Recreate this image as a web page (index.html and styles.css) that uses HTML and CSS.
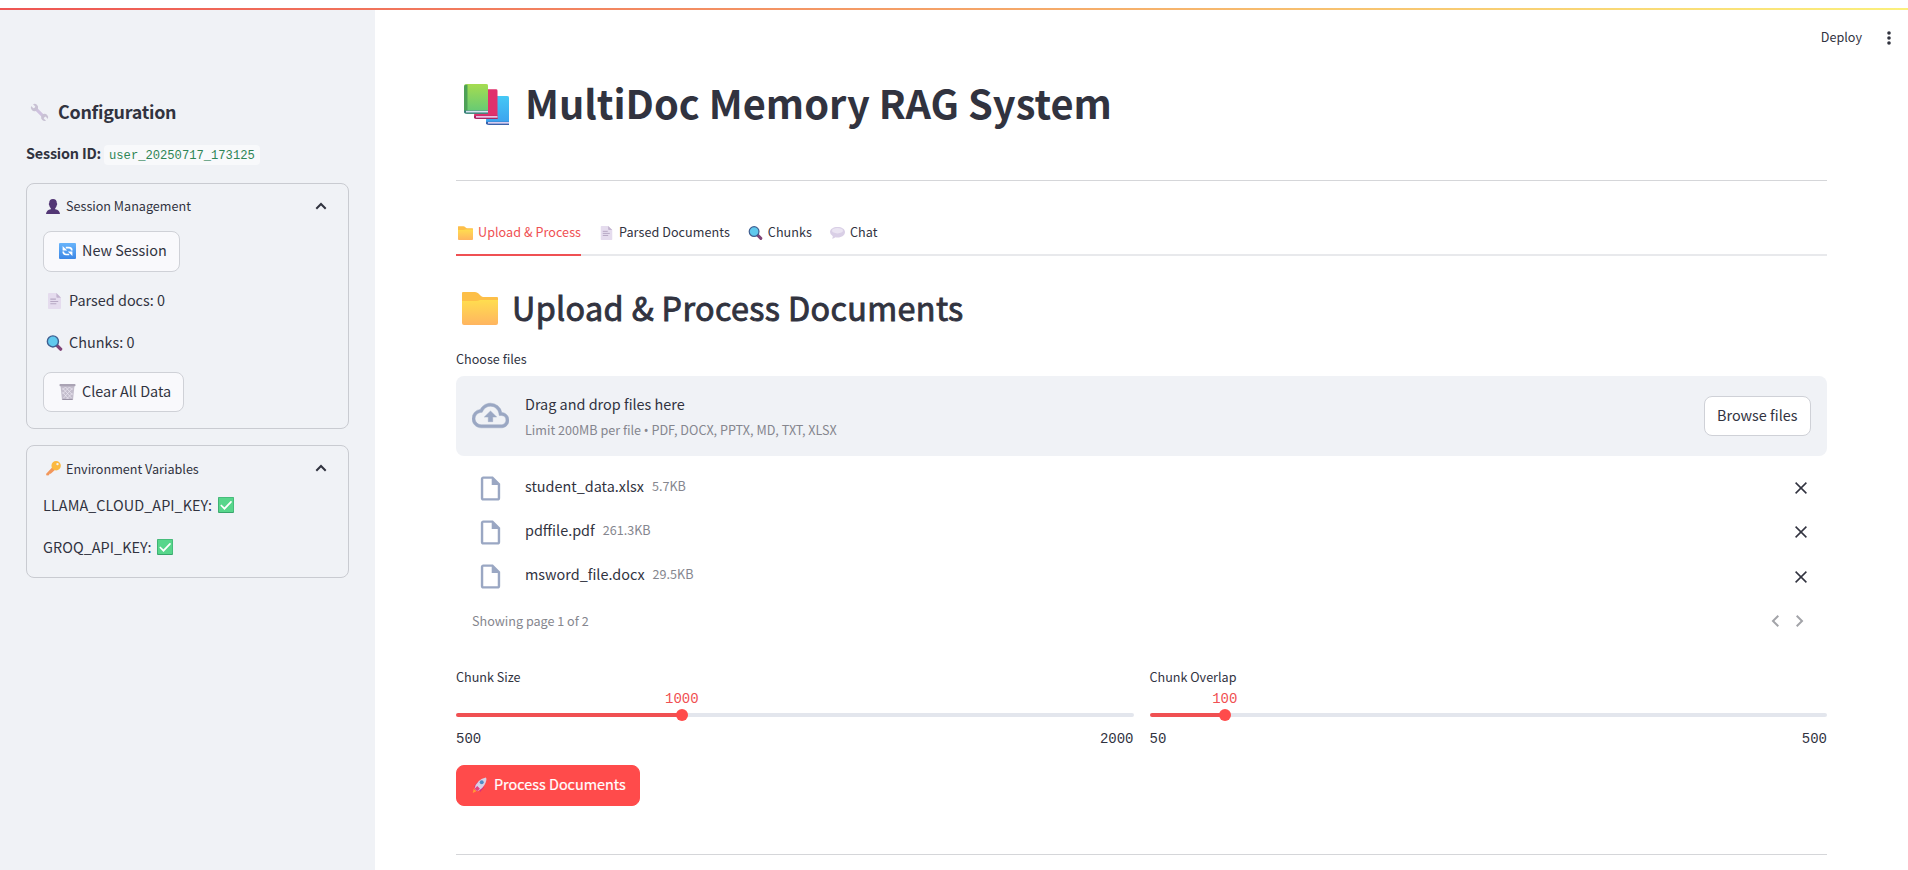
FILE: index.html
```html
<!DOCTYPE html>
<html lang="en">
<head>
<meta charset="utf-8">
<title>MultiDoc Memory RAG System</title>
<link rel="stylesheet" href="styles.css">
</head>
<body>
<svg class="sprite" width="0" height="0">
  <defs>
    <linearGradient id="gy" x1="0" y1="0" x2="0" y2="1"><stop offset="0" stop-color="#ffdd4f"/><stop offset="1" stop-color="#ffb560"/></linearGradient>
    <linearGradient id="gg" x1="0" y1="0" x2="0" y2="1"><stop offset="0" stop-color="#a5dc50"/><stop offset="1" stop-color="#60c878"/></linearGradient>
    <linearGradient id="gb" x1="0" y1="0" x2="0" y2="1"><stop offset="0" stop-color="#45c8f5"/><stop offset="1" stop-color="#3ba0ee"/></linearGradient>
    <linearGradient id="gs" x1="0" y1="0" x2="0" y2="1"><stop offset="0" stop-color="#68b4fb"/><stop offset="1" stop-color="#3c87e6"/></linearGradient>
  </defs>
  <symbol id="folder" viewBox="0 0 36 33"><path d="M1 0h12q2 0 3.500 1.500L19 4q1 1 2.500 1H35q1 0 1 1v8H0V1q0-1 1-1z" fill="#fdbf48"/><path d="M0 9h14q2 0 4-1h18v23q0 2-2 2H2q-2 0-2-2z" fill="url(#gy)"/></symbol>
  <symbol id="page" viewBox="0 0 14 17"><path d="M1 0h8l5 5v11q0 1-1 1H1q-1 0-1-1V1q0-1 1-1z" fill="#e5dcee"/><path d="M9 0l5 5H10q-1 0-1-1z" fill="#c3b4cf"/><path d="M2.500 6.500h6M2.500 9h8.500M2.500 11.500h6.500" stroke="#b7a8c4" stroke-width="1.200"/></symbol>
  <symbol id="lens" viewBox="0 0 17 17"><path d="M10.500 10.500l4.500 4.500" stroke="#814478" stroke-width="3.600" stroke-linecap="round"/><circle cx="6.800" cy="6.800" r="5.900" fill="#60c9ee" stroke="#405f91" stroke-width="1.500"/></symbol>
  <symbol id="bubble" viewBox="0 0 15 12"><path d="M7.500 0C11.800 0 15 2 15 5s-3 5.500-7.500 5.500q-1 0-2-.2L2.300 12 2.800 9.200Q0 7.600 0 5c0-3 3.300-5 7.500-5z" fill="#d9cfe6"/><ellipse cx="7.500" cy="3.700" rx="5.500" ry="2.700" fill="#eae4f2"/></symbol>
  <symbol id="check" viewBox="0 0 16 16"><rect width="16" height="16" rx="1" fill="#37a46b"/><rect x=".7" y=".4" width="14.800" height="14.600" rx=".8" fill="#57d68b"/><path d="M3.300 8.500l3.200 3.200L13 4.800" fill="none" stroke="#fff" stroke-width="1.700" stroke-linecap="round"/></symbol>
  <symbol id="wrench" viewBox="0 0 19 19"><path d="M4.600 4.600l9.800 9.800" stroke="#cfc2df" stroke-width="3"/><path d="M3 1.200L5.300 3.400 4.900 5 3.400 5.300 1.100 3.100A3.700 3.700 0 0 0 5.700 8 3.700 3.700 0 0 0 8 5.600 3.700 3.700 0 0 0 3 1.200zM16 17.800l-2.300-2.200.4-1.600 1.500-.4 2.300 2.300a3.700 3.700 0 0 0-4.600-4.900 3.700 3.700 0 0 0-2.100 2.400 3.700 3.700 0 0 0 4.800 4.400z" fill="#c9c2d4"/></symbol>
  <symbol id="person" viewBox="0 0 14 15"><path d="M7 0Q10.800 0 10.800 4q1 .8 0 2.300-.4 2-1.600 2.900v1Q13.600 11 14 15H0q.4-4 4.800-4.800v-1Q3.600 8.300 3.200 6.300 2.200 4.800 3.200 4 3.200 0 7 0z" fill="#533775"/></symbol>
  <symbol id="cycle" viewBox="0 0 17 16"><rect width="17" height="16" rx="1" fill="url(#gs)"/><path d="M6.800 4.600h3.200q2.800 0 2.800 2.900M10.200 11.500H7q-2.800 0-2.800-2.900" fill="none" stroke="#fff" stroke-width="1.700"/><path d="M3.600 3v4.600h4.600zM13.400 13V8.500H8.800z" fill="#fff"/></symbol>
  <symbol id="bin" viewBox="0 0 16 16"><path d="M1 1.500h14L13.500 16h-11z" fill="#c3bdcc"/><path d="M3 4l9 10M6 3l7 8M10 3l3 3M3 8l6 7M13 4L4 14M10 3L3 10M6 3L3 6M13 9l-6 6" stroke="#eeeaf3" stroke-width=".7"/><path d="M3 15.500h10" stroke="#9a93a5"/><rect width="16" height="2.200" rx=".8" fill="#aaa3b4"/></symbol>
  <symbol id="key" viewBox="0 0 15 15"><path d="M6.300 6.300l2.600 2.600-4.200 3.900-1.200-.1-.5 1.500L.6 14.600 0 13z" fill="#f2975b"/><path d="M10.200 0a4.700 4.700 0 1 1-.1 9.400A4.700 4.700 0 0 1 10.200 0zm1.300 1.900a1.200 1.200 0 1 0 .01 2.400 1.200 1.200 0 0 0 0-2.400z" fill="#fbb941" fill-rule="evenodd"/></symbol>
  <symbol id="books" viewBox="0 0 45 55" preserveAspectRatio="none"><path d="M23 16h20q2 0 2 2v36H25q-3 0-3-3z" fill="url(#gb)"/><path d="M22 50.500h23V55H25q-3 0-3-2z" fill="#3b62aa"/><path d="M24 51h21v2.200H24z" fill="#d8cdf0"/><path d="M12 7h20q1.500 0 1.500 2v38H13q-3 0-3-3z" fill="#e0306c"/><path d="M10 42.500h23.500V47H13q-3 0-3-2z" fill="#a82463"/><path d="M12 43h21.500v2.200H12z" fill="#efc9ea"/><path d="M3 0h19q2 0 2 2v38H3q-3 0-3-3V3q0-3 3-3z" fill="url(#gg)"/><path d="M1 1h2.500v35H0V3z" fill="#4ea156"/><path d="M0 35.500h24V40H3q-3 0-3-3z" fill="#387b7c"/><path d="M2 36h22v2.200H2z" fill="#d5e4ef"/></symbol>
  <symbol id="rocket" viewBox="0 0 17 19"><path d="M2 11L7 5l2 5zM14 11l-5 6-1-6z" fill="#d4307c"/><path d="M1 18l1-5 3 3z" fill="#ff9b35"/><path d="M3 13Q5 3 15.500 .5 17 1.500 15.500 6 13 13 6 16z" fill="#d8cfe5"/><path d="M3 13l3-3 3 3-3 3z" fill="#e4407f"/><circle cx="11" cy="5.800" r="2.200" fill="#4f8bc4"/></symbol>
  <symbol id="up" viewBox="0 0 12 8"><path d="M1.300 6.700L6 2l4.700 4.700" fill="none" stroke="#31333f" stroke-width="2"/></symbol>
  <symbol id="cloud" viewBox="0 0 24 24"><path fill="#9aa7c3" stroke="#9aa7c3" stroke-width=".3" d="M19.350 10.040A7.490 7.490 0 0 0 12 4C9.110 4 6.600 5.640 5.350 8.040A5.994 5.994 0 0 0 0 14c0 3.310 2.690 6 6 6h13c2.760 0 5-2.240 5-5 0-2.640-2.050-4.780-4.650-4.960zM19 18H6c-2.210 0-4-1.790-4-4 0-2.050 1.530-3.760 3.560-3.970l1.070-.11.5-.95A5.469 5.469 0 0 1 12 6c2.620 0 4.880 1.860 5.390 4.430l.3 1.500 1.530.11A2.980 2.980 0 0 1 22 15c0 1.650-1.350 3-3 3zM8 13h2.550v3h2.900v-3H16l-4-4z"/></symbol>
  <symbol id="file" viewBox="0 0 24 24"><path fill="#9aa7c3" d="M14 2H6c-1.100 0-1.990.9-1.990 2L4 20c0 1.100.89 2 1.990 2H18c1.100 0 2-.9 2-2V8l-6-6zM6 20V4h7v5h5v11H6z"/></symbol>
  <symbol id="close" viewBox="0 0 12 12"><path d="M.6.600l10.800 10.800M11.400.600L.6 11.400" stroke="#31333f" stroke-width="1.500"/></symbol>
  <symbol id="next" viewBox="0 0 8 12"><path fill="#a3a4a9" d="M1.410 0L0 1.410 4.580 6 0 10.590 1.410 12l6-6z"/></symbol>
</svg>

<div class="strip"></div>
<div class="app">
  <aside class="sidebar">
    <h2 class="side-title"><svg class="i-wrench"><use href="#wrench"/></svg><span class="t">Configuration</span></h2>
    <p class="session"><b class="t">Session ID:</b><code>user_20250717_173125</code></p>
    <section class="expander sessions">
      <header><svg class="i-person"><use href="#person"/></svg><span class="t">Session Management</span><svg class="i-up"><use href="#up"/></svg></header>
      <div class="btn new"><svg class="i-17"><use href="#cycle"/></svg><span class="t">New Session</span></div>
      <p class="row parsed"><svg class="i-page"><use href="#page"/></svg><span class="t">Parsed docs: 0</span></p>
      <p class="row chunks"><svg class="i-17"><use href="#lens"/></svg><span class="t">Chunks: 0</span></p>
      <div class="btn clear"><svg class="i-17"><use href="#bin"/></svg><span class="t">Clear All Data</span></div>
    </section>
    <section class="expander env">
      <header><svg class="i-key"><use href="#key"/></svg><span class="t">Environment Variables</span><svg class="i-up"><use href="#up"/></svg></header>
      <p class="row key"><span class="t">LLAMA_CLOUD_API_KEY:</span><svg class="i-check"><use href="#check"/></svg></p>
      <p class="row key"><span class="t">GROQ_API_KEY:</span><svg class="i-check"><use href="#check"/></svg></p>
    </section>
  </aside>
  <main class="main">
    <nav class="toolbar"><span class="t">Deploy</span><svg class="dots" viewBox="0 0 4 14"><circle cx="2" cy="2" r="1.800"/><circle cx="2" cy="7" r="1.800"/><circle cx="2" cy="12" r="1.800"/></svg></nav>
    <div class="block">
      <h1><svg class="i-books"><use href="#books"/></svg><span class="t">MultiDoc Memory RAG System</span></h1>
      <hr>
      <div class="tabs">
        <div class="tab active"><svg class="i-tab"><use href="#folder"/></svg><span class="t">Upload &amp; Process</span></div>
        <div class="tab"><svg class="i-tab"><use href="#page"/></svg><span class="t">Parsed Documents</span></div>
        <div class="tab"><svg class="i-tab"><use href="#lens"/></svg><span class="t">Chunks</span></div>
        <div class="tab"><svg class="i-tab"><use href="#bubble"/></svg><span class="t">Chat</span></div>
      </div>
      <h2 class="heading"><svg class="i-folder"><use href="#folder"/></svg><span class="t">Upload &amp; Process Documents</span></h2>
      <div class="label choose">Choose files</div>
      <div class="drop">
        <svg class="i-cloud"><use href="#cloud"/></svg>
        <div class="drop-text"><div class="big">Drag and drop files here</div><div class="small">Limit 200MB per file <span class="bullet">•</span> PDF, DOCX, PPTX, MD, TXT, XLSX</div></div>
        <div class="btn browse"><span class="t">Browse files</span></div>
      </div>
      <div class="files">
        <div class="file"><svg class="i-file"><use href="#file"/></svg><span class="name">student_data.xlsx</span><span class="size">5.7KB</span><svg class="i-close"><use href="#close"/></svg></div>
        <div class="file"><svg class="i-file"><use href="#file"/></svg><span class="name">pdffile.pdf</span><span class="size">261.3KB</span><svg class="i-close"><use href="#close"/></svg></div>
        <div class="file"><svg class="i-file"><use href="#file"/></svg><span class="name">msword_file.docx</span><span class="size">29.5KB</span><svg class="i-close"><use href="#close"/></svg></div>
        <div class="pager"><span>Showing page 1 of 2</span><svg class="i-next prev"><use href="#next"/></svg><svg class="i-next"><use href="#next"/></svg></div>
      </div>
      <div class="sliders">
        <div class="slider">
          <div class="label">Chunk Size</div>
          <div class="track" style="--p:33.333%"><span class="value">1000</span><span class="thumb"></span></div>
          <div class="ticks"><span>500</span><span>2000</span></div>
        </div>
        <div class="slider">
          <div class="label">Chunk Overlap</div>
          <div class="track" style="--p:11.111%"><span class="value">100</span><span class="thumb"></span></div>
          <div class="ticks"><span>50</span><span>500</span></div>
        </div>
      </div>
      <div class="btn primary"><svg class="i-rocket"><use href="#rocket"/></svg><span class="t">Process Documents</span></div>
      <hr class="end">
    </div>
  </main>
</div>
</body>
</html>
```
FILE: styles.css
```css
* { box-sizing: border-box; }
body, h1, h2, p, hr { margin: 0; }
body {
  height: 870px; overflow: hidden; background: #fff; color: #31333f;
  display: flex; flex-direction: column; white-space: nowrap;
  font-family: "Noto Sans CJK SC", "Noto Sans", sans-serif; font-size: 14.42px; line-height: 24px;
}
svg { display: block; flex: none; }
.sprite { position: absolute; }
.t { padding-bottom: 2px; }
.strip { flex: none; height: 10px; padding-top: 8px; background: linear-gradient(90deg, #ee5553, #fbf07c) content-box; }
.strip::before { content: ""; display: block; height: 2px; }
.app { flex: 1; display: flex; min-height: 0; }

.sidebar { width: 375px; background: #f0f2f6; padding: 86px 26px 0; }
.side-title { display: flex; align-items: center; height: 32px; font-size: 17.9px; font-weight: 600; padding-left: 4px; letter-spacing: -.26px; }
.i-wrench { width: 19px; height: 19px; margin-right: 9px; }
.session { display: flex; align-items: center; height: 24px; margin-top: 14px; }
.session b { letter-spacing: -.2px; }
code { font: 12.15px/20px "Liberation Mono", monospace; color: #2e8555; background: #f8f9fb; border-radius: 4px; height: 20px; padding: 1px 5px 0; margin: 2px 0 0 3px; }
.expander { width: 323px; border: 1px solid #c9cbd1; border-radius: 8px; padding: 0 16px; }
.sessions { margin-top: 17px; height: 246px; }
.env { margin-top: 16px; height: 133px; }
.expander header { display: flex; align-items: center; height: 45px; font-size: 12.6px; }
.i-person { width: 14px; height: 15px; margin: 0 6px 0 3px; }
.i-key { width: 15px; height: 15px; margin: 0 5px 0 3px; }
.i-up { width: 12px; height: 8px; margin: 0 5px 1px auto; }
.env .t { padding-bottom: 0; }
.btn { display: flex; align-items: center; height: 41px; border: 1px solid #cfd1d7; border-radius: 8px; background: #f9f9fc; padding: 0 12px; }
.new { width: 137px; margin-top: 2px; padding: 0 0 2px 15px; }
.clear { width: 141px; height: 40px; margin-top: 17px; padding: 0 0 1px 15px; }
.i-17 { width: 17px; height: 16px; margin-right: 6px; }
.row { display: flex; align-items: center; height: 24px; }
.parsed { margin-top: 17px; padding-left: 5px; }
.i-page { width: 13px; height: 16px; margin-right: 8px; }
.chunks { margin-top: 18px; padding-left: 3px; }
.key { margin-top: 18px; letter-spacing: .06px; }
header + .key { margin-top: 2px; }
.i-check { width: 16px; height: 16px; margin-left: 6px; }

.main { flex: 1; display: flex; flex-direction: column; }
.toolbar { display: flex; align-items: center; justify-content: flex-end; height: 56px; padding-right: 17px; font-size: 12.6px; }
.dots { width: 4px; height: 14px; margin-left: 25px; fill: #31333f; }
.block { width: 1371px; margin-left: 81px; }
h1 { display: flex; align-items: center; height: 76px; font-size: 39.75px; line-height: 53px; font-weight: 700; }
h1 .t { padding-bottom: 5px; }
.i-books { width: 45px; height: 41px; margin: 0 16px 0 8px; }
hr { border: 0; height: 1px; background: #d5d6d9; }
h1 + hr { margin-top: 38px; }
.tabs { display: flex; gap: 16px; height: 40px; margin-top: 35px; border-bottom: 2px solid #e8e9ec; font-size: 12.6px; letter-spacing: .05px; }
.tab { display: flex; align-items: center; height: 40px; padding-bottom: 7px; }
.active { color: #ef5053; border-bottom: 2px solid #ef5053; padding-bottom: 5px; }
.tabs .t { padding-bottom: 1px; }
.i-tab { width: 15px; height: 14px; margin: 0 5px 0 2px; }
.heading { display: flex; align-items: center; height: 60px; margin-top: 22px; font-size: 32.3px; font-weight: 400; -webkit-text-stroke: .9px #31333f; letter-spacing: .38px; }
.i-folder { width: 36px; height: 33px; margin: 0 14px 0 6px; }
.heading svg { -webkit-text-stroke: 0; }
.label { display: flex; align-items: center; height: 20px; font-size: 12.6px; }
.choose { margin-top: 11px; }
.drop { display: flex; align-items: center; height: 80px; margin-top: 7px; padding: 0 16px; background: #f0f2f6; border-radius: 8px; }
.i-cloud { width: 37px; height: 37px; margin: 0 16px 2px 0; }
.drop-text { padding-top: 3px; }
.small { font-size: 12.62px; color: #85868e; margin-top: 2px; }
.bullet { font-family: "Noto Sans", sans-serif; }
.browse { margin-left: auto; background: #fff; width: 107px; height: 40px; }
.files { padding: 10px 16px 0; }
.file { display: flex; align-items: center; height: 44.3px; }
.i-file { width: 29px; height: 29px; margin: 0 20px 0 4px; }
.name, .size { padding-bottom: 5px; }
.size { font-size: 12.6px; color: #85868e; margin-left: 8px; }
.i-close { width: 12px; height: 12px; margin: 0 4px 0 auto; }
.pager { display: flex; align-items: center; height: 44px; font-size: 12.6px; color: #85868e; }
.i-next { width: 8px; height: 12px; margin-right: 7px; }
.prev { transform: scaleX(-1); margin: 0 17px 0 auto; }
.sliders { display: grid; grid-template-columns: 1fr 1fr; gap: 16px; margin-top: 24px; }
.track { position: relative; height: 4px; margin-top: 26px; border-radius: 2px; background: linear-gradient(90deg, #f05052 var(--p), #e3e6ed var(--p)); }
.thumb { position: absolute; left: var(--p); top: -4px; width: 12px; height: 12px; margin-left: -6px; border-radius: 50%; background: #ff4b4b; }
.value { position: absolute; left: var(--p); bottom: 8px; transform: translateX(-50%); color: #f05052; line-height: 20px; }
.value, .ticks { font-family: "Liberation Mono", monospace; font-size: 14px; }
.ticks { display: flex; justify-content: space-between; margin-top: 11px; margin-bottom: -1px; line-height: 22px; }
.primary { width: 184px; margin-top: 16px; padding: 0 14px; color: #fff; background: #ff4b4b; border-color: #ff4b4b; }
.i-rocket { width: 17px; height: 17px; margin-right: 6px; }
.primary .t { -webkit-text-stroke: .2px #fff; }
.end { margin-top: 48px; }
```
